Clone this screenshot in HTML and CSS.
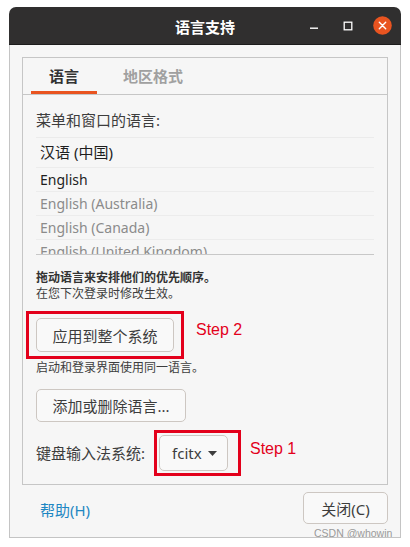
FILE: index.html
```html
<!DOCTYPE html>
<html lang="zh-CN">
<head>
<meta charset="utf-8">
<title>语言支持</title>
<link rel="stylesheet" href="styles.css">
</head>
<body>
<div class="window">
  <div class="titlebar">
    <span class="title">语言支持</span>
    <div class="controls">
      <span class="ctl">
        <svg width="10" height="10" viewBox="0 0 10 10"><rect x="1" y="6.5" width="8" height="1.4" fill="#ffffff"/></svg>
      </span>
      <span class="ctl">
        <svg width="10" height="10" viewBox="0 0 10 10"><rect x="1.2" y="1.2" width="7.6" height="7.6" fill="none" stroke="#ffffff" stroke-width="1.3"/></svg>
      </span>
      <span class="ctl ctl-close">
        <svg width="19" height="19" viewBox="0 0 19 19"><circle cx="9.5" cy="9.5" r="9.3" fill="#e95420"/><path d="M6.3 6.3 L12.7 12.7 M12.7 6.3 L6.3 12.7" stroke="#ffffff" stroke-width="1.4" stroke-linecap="round"/></svg>
      </span>
    </div>
  </div>
  <div class="body">
    <div class="notebook">
      <div class="tabs">
        <div class="tab active">语言</div>
        <div class="tab">地区格式</div>
      </div>
      <div class="page">
        <div class="label">菜单和窗口的语言:</div>
        <div class="list">
          <div class="row tall current">汉语 (中国)</div>
          <div class="row current">English</div>
          <div class="row">English (Australia)</div>
          <div class="row">English (Canada)</div>
          <div class="row">English (United Kingdom)</div>
        </div>
        <div class="note note-bold">拖动语言来安排他们的优先顺序。</div>
        <div class="note">在您下次登录时修改生效。</div>
        <button class="btn btn-apply">应用到整个系统</button>
        <div class="note note-after">启动和登录界面使用同一语言。</div>
        <button class="btn btn-add">添加或删除语言...</button>
        <div class="im-row">
          <span class="im-label">键盘输入法系统:</span>
          <button class="btn combo"><span>fcitx</span><svg width="9" height="5" viewBox="0 0 9 5"><path d="M0 0 L9 0 L4.5 5 Z" fill="#3d3d3d"/></svg></button>
        </div>
      </div>
    </div>
    <div class="footer">
      <a class="help">帮助(H)</a>
      <button class="btn btn-close">关闭(C)</button>
    </div>
  </div>
  <div class="mark mark-apply"></div>
  <div class="mark mark-im"></div>
  <div class="step step-2">Step 2</div>
  <div class="step step-1">Step 1</div>
  <div class="watermark">CSDN @whowin</div>
</div>
</body>
</html>
```
FILE: styles.css
```css
* { box-sizing: border-box; }
html, body { margin: 0; background: #ffffff; }
body {
  font-family: "Noto Sans", "Noto Sans CJK SC", sans-serif;
  color: #3d3d3d;
}
.window {
  position: relative;
  margin: 7px 0 0 9px;
  width: 392px;
}
.titlebar {
  height: 38px;
  background: #302f2f;
  border-bottom: 1px solid #1c1c1c;
  border-radius: 7px 7px 0 0;
  display: grid;
  grid-template-columns: 1fr auto 1fr;
  align-items: center;
}
.title {
  grid-column: 2;
  color: #ffffff;
  font-family: "Noto Sans CJK SC", sans-serif;
  font-weight: bold;
  font-size: 15px;
  line-height: 20px;
  padding-top: 2px;
}
.controls {
  grid-column: 3;
  justify-self: end;
  display: flex;
  align-items: center;
  gap: 10px;
  padding-right: 7px;
}
.ctl {
  width: 24px;
  height: 24px;
  display: flex;
  align-items: center;
  justify-content: center;
}
.body {
  background: #f6f6f6;
  border: 1px solid #c4c4c4;
  border-top: none;
  padding: 12px 12px 0;
}
.notebook {
  border: 1px solid #c6c6c6;
}
.tabs {
  display: flex;
  gap: 8px;
  padding-left: 8px;
  height: 37px;
  border-bottom: 1px solid #c6c6c6;
}
.tab {
  height: 36px;
  line-height: 36px;
  padding: 0 18px;
  font-family: "Noto Sans CJK SC", sans-serif;
  font-size: 15px;
  font-weight: bold;
  color: #a0a0a0;
}
.tab.active {
  color: #333333;
  box-shadow: inset 0 -3px 0 #e95420;
}
.page {
  padding: 15px 13px 13px;
}
.label {
  font-size: 15px;
  line-height: 20px;
}
.list {
  margin-top: 7px;
  height: 118px;
  overflow: hidden;
  border-top: 1px solid #ebebeb;
  border-bottom: 1px solid #c8c8c8;
}
.row {
  height: 24px;
  line-height: 23px;
  padding-left: 4px;
  border-bottom: 1px solid #ececec;
  font-size: 14px;
  color: #8b8b8b;
  white-space: nowrap;
}
.row.tall {
  height: 30px;
  line-height: 29px;
  font-size: 15px;
}
.row.current {
  color: #1e1e1e;
}
.note {
  font-size: 12px;
  line-height: 16px;
}
.note-bold {
  margin-top: 15px;
  font-weight: bold;
  color: #333333;
}
.note-after {
  margin-top: 8px;
}
.btn {
  display: block;
  font-family: "Noto Sans", "Noto Sans CJK SC", sans-serif;
  font-size: 15px;
  color: #3d3d3d;
  background: #f9f9f9;
  border: 1px solid #cdc7c2;
  border-radius: 5px;
  padding: 0;
}
.btn-apply {
  margin-top: 16px;
  width: 138px;
  height: 34px;
}
.btn-add {
  margin-top: 13px;
  width: 150px;
  height: 33px;
}
.im-row {
  margin-top: 13px;
  display: flex;
  align-items: center;
}
.im-label {
  font-size: 15px;
  line-height: 20px;
}
.combo {
  margin-left: 14px;
  width: 69px;
  height: 36px;
  display: flex;
  align-items: center;
  gap: 6px;
  padding: 0 0 0 12px;
}
.footer {
  display: flex;
  justify-content: space-between;
  align-items: center;
  padding: 7px 0 13px;
}
.help {
  margin-left: 18px;
  margin-top: 2px;
  font-size: 15px;
  color: #1d87c3;
}
.btn-close {
  width: 85px;
  height: 32px;
}
.mark {
  position: absolute;
  border: 3px solid #e3001b;
}
.mark-apply {
  left: 17px;
  top: 304px;
  width: 158px;
  height: 48px;
}
.mark-im {
  left: 145px;
  top: 423px;
  width: 87px;
  height: 46px;
}
.step {
  position: absolute;
  font-family: "Liberation Sans", Arial, sans-serif;
  font-size: 16px;
  line-height: 16px;
  color: #e3001b;
}
.step-2 { left: 187px; top: 315px; }
.step-1 { left: 241px; top: 434px; }
.watermark {
  position: absolute;
  left: 305px;
  top: 521px;
  font-family: "Liberation Sans", Arial, sans-serif;
  font-size: 10.5px;
  line-height: 10.5px;
  color: #9a9a9a;
}
```
